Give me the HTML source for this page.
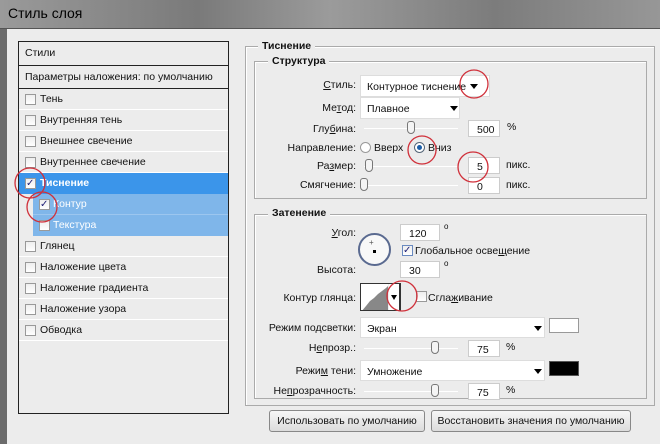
<!DOCTYPE html><html><head><meta charset="utf-8"><style>
*{box-sizing:border-box}body{margin:0;width:660px;height:444px;overflow:hidden;background:#ececec;font-family:"Liberation Sans","DejaVu Sans",sans-serif;font-size:10.5px;color:#111;position:relative}
.a{position:absolute;white-space:nowrap}
.tb{left:0;top:0;width:660px;height:29px;background:linear-gradient(90deg,#9a9a9a,#7a7a7a 30%,#9b9b9b 50%,#7c7c7c 75%,#979797);border-bottom:1px solid #555}
.lp{left:18px;top:41px;width:211px;height:373px;border:1px solid #222;background:#ececec}
.row{position:absolute;left:0;width:209px;height:21px;border-bottom:1px solid #fff;padding-left:21px;line-height:20px}
.cb{position:absolute;width:11px;height:11px;border:1px solid #999;background:linear-gradient(#eee,#fff)}
.fs{border:1px solid #aaa;box-shadow:inset 1px 1px 0 #fff}
.lg{background:#ececec;font-weight:bold;padding:0 4px}
.inp{background:#fff;border:1px solid #ccc;height:17px;padding:3px 0 0 8px}
.dd{background:#fff;border:1px solid #ddd;height:22px;padding:5px 0 0 6px}
.tri{position:absolute;width:0;height:0;border-left:4px solid transparent;border-right:4px solid transparent;border-top:5px solid #000}
.sl{height:1px;background:#bbb;border-bottom:1px solid #fff}
.th{position:absolute;width:8px;height:13px;border:1px solid #777;border-radius:3px 3px 4px 4px;background:#f4f4f4}
.r{text-align:right}
.btn{border:1px solid #888;border-radius:3px;background:linear-gradient(#f6f6f6,#dcdcdc);height:22px;text-align:center;line-height:20px}
</style></head><body>
<div class="a tb"></div>
<div class="a" style="left:8px;top:5px;font-size:14px;color:#000">Стиль слоя</div>
<div class="a" style="left:0;top:29px;width:7px;height:415px;background:#6b6b6b"></div>

<div class="a lp">
<div class="row" style="top:0;height:24px;padding-left:6px;line-height:23px;border-bottom:1px solid #222">Стили</div>
<div class="row" style="top:24px;height:23px;padding-left:6px;line-height:22px;border-bottom:1px solid #222">Параметры наложения: по умолчанию</div>
<div class="row" style="top:47px"><span class="cb" style="left:6px;top:5px"></span>Тень</div>
<div class="row" style="top:68px"><span class="cb" style="left:6px;top:5px"></span>Внутренняя тень</div>
<div class="row" style="top:89px"><span class="cb" style="left:6px;top:5px"></span>Внешнее свечение</div>
<div class="row" style="top:110px"><span class="cb" style="left:6px;top:5px"></span>Внутреннее свечение</div>
<div class="row" style="top:131px;background:#3b95ea;color:#fff;font-weight:bold;border-color:#3b95ea"><span class="cb" style="left:6px;top:5px;color:#227;font-size:10px;line-height:9px">✓</span>Тиснение</div>
<div class="row" style="top:152px;left:14px;width:195px;background:#7fb6ea;color:#fff;padding-left:20px;border-color:#9cc6ef"><span class="cb" style="left:6px;top:5px;color:#227;font-size:10px;line-height:9px">✓</span>Контур</div>
<div class="row" style="top:173px;left:14px;width:195px;background:#7fb6ea;color:#fff;padding-left:20px;border-color:#7fb6ea"><span class="cb" style="left:6px;top:5px"></span>Текстура</div>
<div class="row" style="top:194px"><span class="cb" style="left:6px;top:5px"></span>Глянец</div>
<div class="row" style="top:215px"><span class="cb" style="left:6px;top:5px"></span>Наложение цвета</div>
<div class="row" style="top:236px"><span class="cb" style="left:6px;top:5px"></span>Наложение градиента</div>
<div class="row" style="top:257px"><span class="cb" style="left:6px;top:5px"></span>Наложение узора</div>
<div class="row" style="top:278px"><span class="cb" style="left:6px;top:5px"></span>Обводка</div>
</div>

<div class="a fs" style="left:245px;top:46px;width:410px;height:360px"></div>
<div class="a lg" style="left:258px;top:40px">Тиснение</div>
<div class="a fs" style="left:254px;top:61px;width:393px;height:138px"></div>
<div class="a lg" style="left:268px;top:55px">Структура</div>

<div class="a r" style="left:280px;top:79px;width:76px"><u>С</u>тиль:</div>
<div class="a dd" style="left:360px;top:75px;width:130px">Контурное тиснение</div><div class="tri" style="left:470px;top:84px"></div>
<div class="a r" style="left:280px;top:102px;width:76px">Ме<u>т</u>од:</div>
<div class="a dd" style="left:360px;top:97px;width:100px">Плавное</div><div class="tri" style="left:450px;top:106px"></div>
<div class="a r" style="left:280px;top:123px;width:76px">Глу<u>б</u>ина:</div>
<div class="a sl" style="left:364px;top:128px;width:94px"></div><div class="th" style="left:407px;top:121px"></div>
<div class="a inp" style="left:468px;top:120px;width:32px">500</div><div class="a" style="left:507px;top:121px">%</div>
<div class="a r" style="left:260px;top:142px;width:96px">Направление:</div>
<div class="a" style="left:360px;top:142px;width:11px;height:11px;border:1px solid #999;border-radius:50%;background:#fff"></div><div class="a" style="left:374px;top:142px">Вверх</div>
<div class="a" style="left:414px;top:142px;width:11px;height:11px;border:1px solid #567;border-radius:50%;background:#fff"></div><div class="a" style="left:417px;top:145px;width:5px;height:5px;border-radius:50%;background:#1a5ea8"></div><div class="a" style="left:428px;top:142px">Вниз</div>
<div class="a r" style="left:280px;top:160px;width:76px">Ра<u>з</u>мер:</div>
<div class="a sl" style="left:364px;top:166px;width:94px"></div><div class="th" style="left:365px;top:159px"></div>
<div class="a inp" style="left:468px;top:157px;width:32px">5</div><div class="a" style="left:506px;top:159px">пикс.</div>
<div class="a r" style="left:280px;top:179px;width:76px">Смягчение:</div>
<div class="a sl" style="left:364px;top:185px;width:94px"></div><div class="th" style="left:360px;top:178px"></div>
<div class="a inp" style="left:468px;top:177px;width:32px">0</div><div class="a" style="left:506px;top:179px">пикс.</div>

<div class="a fs" style="left:254px;top:214px;width:393px;height:185px"></div>
<div class="a lg" style="left:268px;top:207px">Затенение</div>
<div class="a r" style="left:280px;top:227px;width:76px"><u>У</u>гол:</div>
<div class="a inp" style="left:400px;top:224px;width:40px">120</div><div class="a" style="left:444px;top:222px;font-size:8px">o</div>
<div class="a" style="left:358px;top:233px;width:33px;height:33px;border:2px solid #5a6a90;border-radius:50%;background:#f8f8f8"></div>
<div class="a" style="left:373px;top:250px;width:3px;height:3px;background:#000"></div>
<div class="a" style="left:369px;top:238px;font-size:8px;color:#555">+</div>
<div class="a cb" style="left:402px;top:245px;color:#227;font-size:10px;line-height:9px;border-color:#6a8ac0">✓</div>
<div class="a" style="left:415px;top:245px">Глобальное осве<u>щ</u>ение</div>
<div class="a r" style="left:280px;top:264px;width:76px">Высота:</div>
<div class="a inp" style="left:400px;top:261px;width:40px">30</div><div class="a" style="left:444px;top:259px;font-size:8px">o</div>
<div class="a r" style="left:260px;top:292px;width:96px">Контур глянца:</div>
<div class="a" style="left:360px;top:283px;width:40px;height:28px;border:1px solid #333;background:#fff;overflow:hidden">
<svg width="40" height="28" style="position:absolute;left:0;top:0"><path d="M0 28 L5 22 L9 17 L13 14 L17 10 L21 7 L25 4 L27 2 L27 28Z" fill="#888"/></svg>
<div style="position:absolute;left:27px;top:0;width:13px;height:28px;background:#fff;border-left:1px solid #eee"></div>
<div class="tri" style="left:30px;top:11px;border-width:5px 3px 0 3px"></div>
</div>
<div class="a" style="left:399px;top:283px;width:2px;height:28px;background:#333"></div>
<div class="a cb" style="left:416px;top:291px"></div><div class="a" style="left:428px;top:292px">Сгла<u>ж</u>ивание</div>
<div class="a r" style="left:260px;top:322px;width:96px">Режим подсветки:</div>
<div class="a dd" style="left:360px;top:317px;width:185px;height:21px">Экран</div><div class="tri" style="left:534px;top:326px"></div>
<div class="a" style="left:549px;top:318px;width:30px;height:15px;background:#fff;border:1px solid #999"></div>
<div class="a r" style="left:260px;top:342px;width:96px">Н<u>е</u>прозр.:</div>
<div class="a sl" style="left:364px;top:348px;width:94px"></div><div class="th" style="left:431px;top:341px"></div>
<div class="a inp" style="left:468px;top:340px;width:32px">75</div><div class="a" style="left:506px;top:341px">%</div>
<div class="a r" style="left:260px;top:365px;width:96px">Режи<u>м</u> тени:</div>
<div class="a dd" style="left:360px;top:360px;width:185px;height:21px">Умножение</div><div class="tri" style="left:534px;top:369px"></div>
<div class="a" style="left:549px;top:361px;width:30px;height:15px;background:#000;border:1px solid #555"></div>
<div class="a r" style="left:250px;top:385px;width:106px">Не<u>п</u>розрачность:</div>
<div class="a sl" style="left:364px;top:391px;width:94px"></div><div class="th" style="left:431px;top:384px"></div>
<div class="a inp" style="left:468px;top:383px;width:32px">75</div><div class="a" style="left:506px;top:384px">%</div>

<div class="a btn" style="left:269px;top:410px;width:156px">Использовать по умолчанию</div>
<div class="a btn" style="left:431px;top:410px;width:200px">Восстановить значения по умолчанию</div>

<svg class="a" style="left:0;top:0" width="660" height="444"><g fill="none" stroke="#d0303a" stroke-width="1.3">
<circle cx="30" cy="183" r="15"/><circle cx="42" cy="207" r="15"/>
<circle cx="474" cy="84" r="14"/><circle cx="422" cy="150" r="14"/><circle cx="473" cy="167" r="15"/>
<circle cx="402" cy="296" r="15"/></g></svg>
</body></html>
